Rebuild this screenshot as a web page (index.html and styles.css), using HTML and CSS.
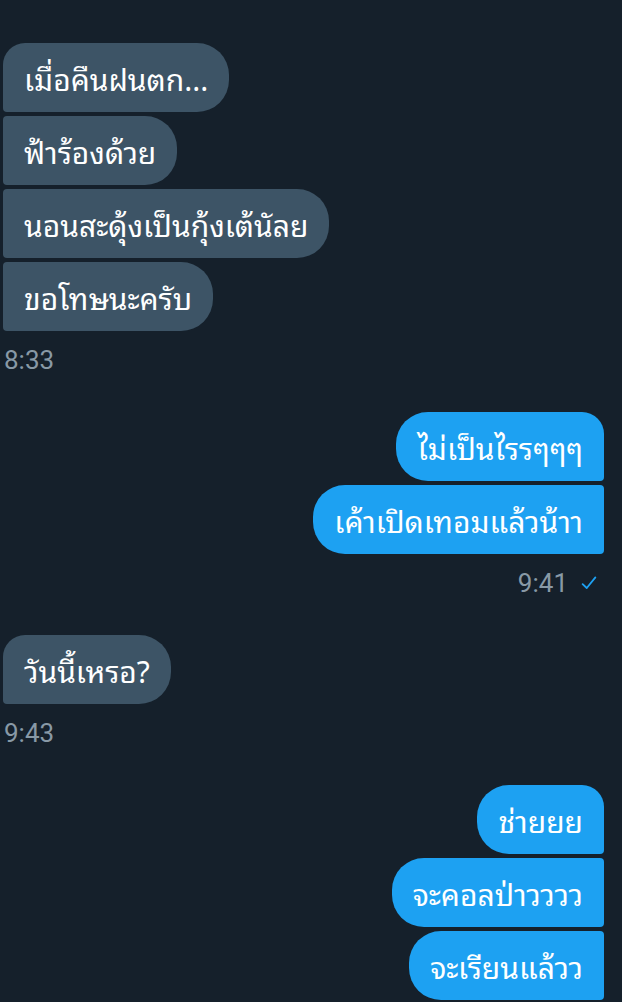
FILE: index.html
```html
<!DOCTYPE html>
<html lang="th">
<head>
<meta charset="UTF-8">
<meta name="viewport" content="width=device-width, initial-scale=1.0">
<title>ข้อความ</title>
<link rel="stylesheet" href="styles.css">
</head>
<body>
<div class="chat">
    <div class="peek">เมื่อวาน 8:30 น.</div>

    <div class="group in">
        <div class="bubble first">เมื่อคืนฝนตก...</div>
        <div class="bubble">ฟ้าร้องด้วย</div>
        <div class="bubble">นอนสะดุ้งเป็นกุ้งเต้นัลย</div>
        <div class="bubble last">ขอโทษนะครับ</div>
        <div class="time">8:33</div>
    </div>

    <div class="group out">
        <div class="bubble first">ไม่เป็นไรรๆๆๆ</div>
        <div class="bubble last">เค้าเปิดเทอมแล้วน้าา</div>
        <div class="time">9:41
            <svg class="check" viewBox="0 0 24 24" width="18" height="18">
                <path d="M3.5 13.5l5.5 5.2L20.5 4.5" fill="none" stroke="currentColor" stroke-width="2.4" stroke-linecap="round" stroke-linejoin="round"/>
            </svg>
        </div>
    </div>

    <div class="group in">
        <div class="bubble first last">วันนี้เหรอ?</div>
        <div class="time">9:43</div>
    </div>

    <div class="group out">
        <div class="bubble first">ช่ายยย</div>
        <div class="bubble">จะคอลป่าวววว</div>
        <div class="bubble last">จะเรียนแล้วว</div>
    </div>
</div>
</body>
</html>
```

FILE: styles.css
```css
body, html {
    margin: 0;
    padding: 0;
    height: 100%;
    overflow: hidden;
}

body {
    background: #15202b;
    font-family: 'Noto Sans Thai Looped', 'Loma', 'Garuda', 'Waree', 'Umpush', 'Norasi', 'Tlwg Typo', 'Noto Sans', 'Noto Sans Thai', sans-serif;
    color: #ffffff;
}

.chat {
    display: flex;
    flex-direction: column;
    gap: 38px;
    padding: 3px 18px 0 3px;
}

.peek {
    align-self: flex-end;
    margin-top: -22px;
    margin-right: 30px;
    height: 24px;
    font-family: Roboto, sans-serif;
    font-size: 24px;
    line-height: 17px;
    color: #8899a6;
}

.group {
    display: flex;
    flex-direction: column;
    gap: 4px;
}

.group.in {
    align-items: flex-start;
}

.group.out {
    align-items: flex-end;
}

.bubble {
    font-size: 30px;
    line-height: 37px;
    padding: 16px 21px;
    border-radius: 4px 32px 32px 4px;
    white-space: nowrap;
}

.in .bubble {
    background: #3d5466;
}

.in .bubble.first {
    border-top-left-radius: 22px;
}

.out .bubble {
    background: #1da1f2;
    border-radius: 32px 4px 4px 32px;
}

.out .bubble.first {
    border-top-right-radius: 22px;
}

.time {
    display: flex;
    align-items: center;
    gap: 12px;
    margin-top: 11px;
    font-family: Roboto, sans-serif;
    font-size: 26px;
    line-height: 28px;
    color: #8899a6;
    padding: 0 1px;
}

.out .time {
    margin-right: 5px;
}

.check {
    color: #1da1f2;
}
```
